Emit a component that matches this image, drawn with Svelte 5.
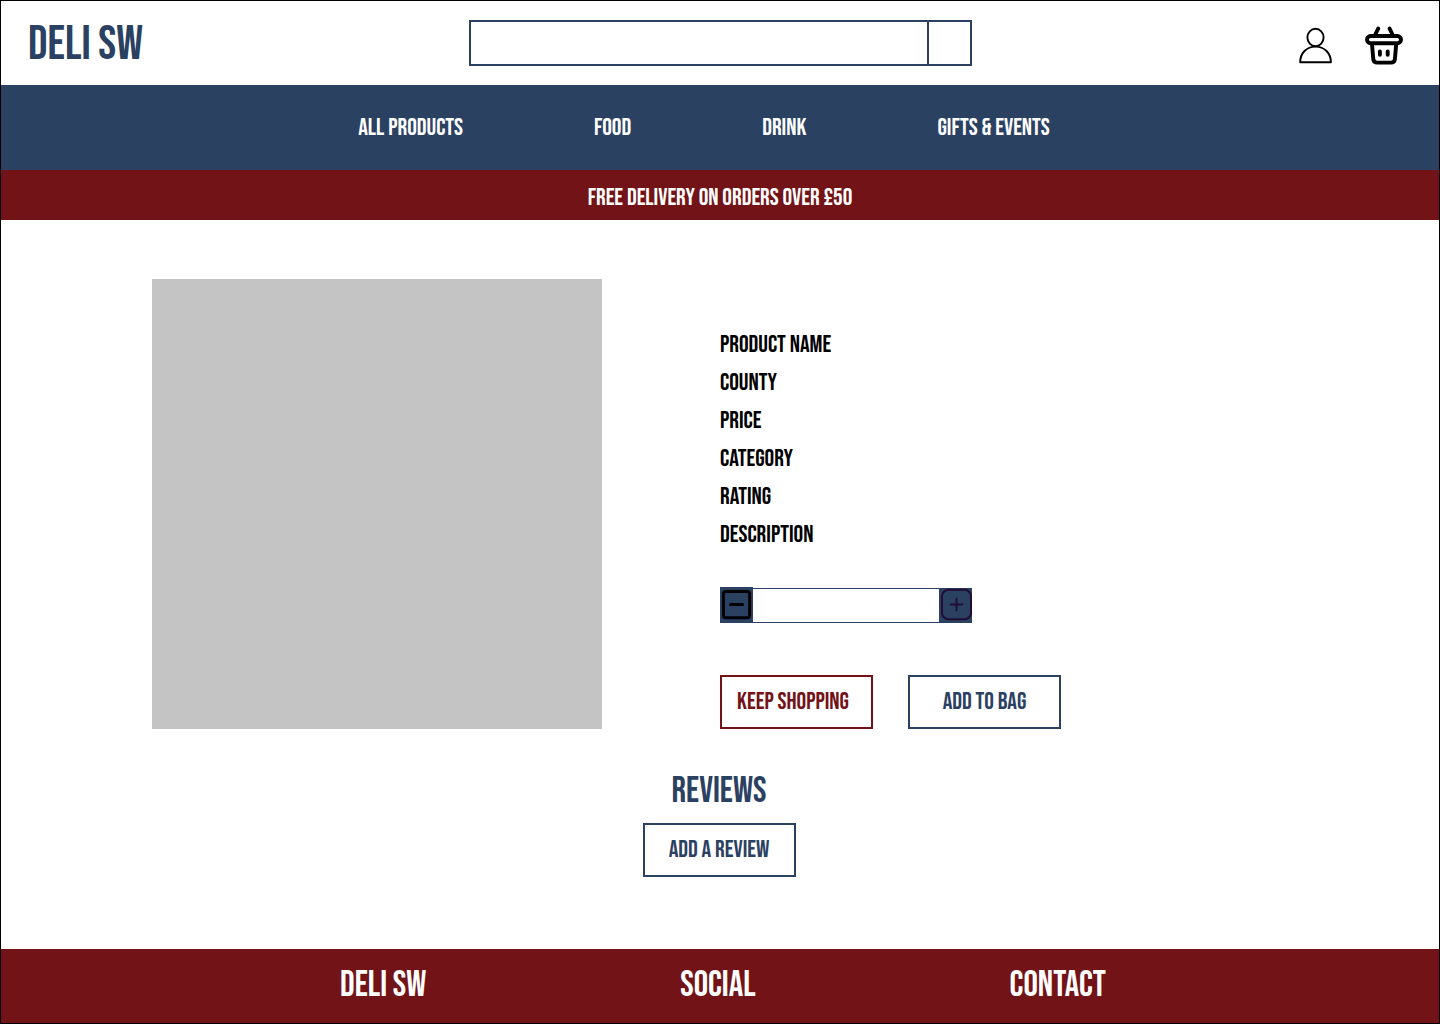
<script>
  const navItems = ['ALL PRODUCTS', 'FOOD', 'DRINK', 'GIFTS & EVENTS'];
  const details = ['PRODUCT NAME', 'COUNTY', 'PRICE', 'CATEGORY', 'RATING', 'DESCRIPTION'];
  const footerItems = ['DELI SW', 'SOCIAL', 'CONTACT'];
  let quantity = $state('');

  function step(amount) {
    quantity = String(Math.max(0, (Number(quantity) || 0) + amount));
  }
</script>

<div class="page">
  <header class="top">
    <a class="logo" href="#home">DELI SW</a>
    <form class="search" role="search" onsubmit={(e) => e.preventDefault()}>
      <input type="search" aria-label="Search products" />
      <button type="submit" aria-label="Search"></button>
    </form>
    <div class="actions">
      <a href="#account" aria-label="Account">
        <svg width="34" height="38" viewBox="0 0 34 38" fill="none" stroke="#000" stroke-width="1.9">
          <ellipse cx="16.5" cy="10.5" rx="8.1" ry="8.7" />
          <path d="M1.2 35.2C1.2 26.2 7.6 19.6 16.5 19.6S31.9 26.2 31.9 35.2Z" stroke-linejoin="round" />
        </svg>
      </a>
      <a href="#basket" aria-label="Basket">
        <svg width="38" height="40" viewBox="0 0 38 40" fill="none" stroke="#000" stroke-width="3.9" stroke-linecap="round" stroke-linejoin="round">
          <path d="M13.2 2.6L9.8 9.5M24.6 2.6L28 9.5" />
          <rect x="2" y="10" width="34" height="7.2" rx="3.6" />
          <path d="M7 18L8.3 33.3Q8.7 36.6 12.2 36.6H26Q29.5 36.6 29.9 33.3L31.2 18" />
          <path d="M14.9 25.4V28.8M22.7 25.4V28.8" />
        </svg>
      </a>
    </div>
  </header>

  <nav class="nav" aria-label="Main">
    {#each navItems as item}
      <a href="#shop">{item}</a>
    {/each}
  </nav>

  <p class="banner">FREE DELIVERY ON ORDERS OVER £50</p>

  <main>
    <section class="product" aria-label="Product">
      <div class="photo"></div>
      <div class="info">
        <ul>
          {#each details as detail}
            <li>{detail}</li>
          {/each}
        </ul>
        <div class="quantity">
          <button type="button" aria-label="Decrease quantity" onclick={() => step(-1)}>
            <svg width="33" height="36" viewBox="0 0 33 36" fill="none" stroke="#000" stroke-width="3" stroke-linecap="round">
              <rect x="3.4" y="4.4" width="26.2" height="26.4" rx="2.5" />
              <path d="M10.5 17.5H22.5" />
            </svg>
          </button>
          <input type="text" inputmode="numeric" aria-label="Quantity" bind:value={quantity} />
          <button type="button" aria-label="Increase quantity" onclick={() => step(1)}>
            <svg width="33" height="35" viewBox="0 0 33 35" fill="none" stroke="#210d35" stroke-width="2" stroke-linecap="round">
              <rect x="3" y="1.8" width="29" height="29.4" rx="6.5" />
              <path d="M11.7 16.5H23.3M17.5 10.7V22.3" />
            </svg>
          </button>
        </div>
        <div class="buttons">
          <button class="btn red" type="button">KEEP SHOPPING</button>
          <button class="btn" type="button">ADD TO BAG</button>
        </div>
      </div>
    </section>

    <section class="reviews">
      <h2>REVIEWS</h2>
      <button class="btn" type="button">ADD A REVIEW</button>
    </section>
  </main>

  <footer>
    {#each footerItems as item}
      <a href="#footer">{item}</a>
    {/each}
  </footer>
</div>

<style>
  :global(body) {
    margin: 0;
  }
  .page {
    --navy: #2b4162;
    --red: #721317;
    box-sizing: border-box;
    min-height: 100vh;
    display: flex;
    flex-direction: column;
    border: 1px solid #000;
    background: #fff;
    color: #000;
    font-family: 'Bebas Neue', 'Roboto Condensed', 'Liberation Sans Narrow', sans-serif;
    font-size: 24px;
    font-weight: 400;
    line-height: 24px;
  }
  a {
    color: inherit;
    text-decoration: none;
  }
  button,
  input {
    box-sizing: border-box;
    margin: 0;
    padding: 0;
    border: 0;
    border-radius: 0;
    background: none;
    color: inherit;
    font: inherit;
  }
  button {
    cursor: pointer;
  }
  svg {
    display: block;
  }
  .top {
    display: grid;
    grid-template-columns: 1fr minmax(0, 503px) 1fr;
    align-items: center;
    min-height: 84px;
    padding: 0 27px;
    box-sizing: border-box;
  }
  .logo {
    padding-top: 4px;
    color: var(--navy);
    font-size: 48px;
    line-height: 48px;
  }
  .search {
    display: flex;
    height: 46px;
    box-sizing: border-box;
    border: 2px solid var(--navy);
  }
  .search input {
    flex: 1;
    min-width: 0;
    padding: 0 12px;
    appearance: none;
  }
  .search button {
    width: 43px;
    border-left: 2px solid var(--navy);
  }
  .actions {
    display: flex;
    justify-content: flex-end;
    align-items: center;
    gap: 32px;
    padding: 6px 9px 0 0;
  }
  .nav {
    display: flex;
    justify-content: center;
    align-items: center;
    flex-wrap: wrap;
    gap: 0 131px;
    min-height: 85px;
    padding-right: 32px;
    background: var(--navy);
    color: #fff;
  }
  .banner {
    margin: 0;
    padding: 16px 0 10px;
    background: var(--red);
    color: #fff;
    text-align: center;
  }
  main {
    flex: 1;
  }
  .product {
    display: flex;
    align-items: flex-end;
    flex-wrap: wrap;
    gap: 32px 118px;
    padding: 59px 151px 0;
  }
  .photo {
    width: 450px;
    aspect-ratio: 1;
    background: #c4c4c4;
  }
  ul {
    margin: 0 0 33px;
    padding: 0;
    list-style: none;
    line-height: 38px;
  }
  .quantity {
    display: flex;
    align-items: flex-end;
    width: 252px;
    margin-bottom: 52px;
  }
  .quantity button {
    background: var(--navy);
  }
  .quantity input {
    flex: 1;
    min-width: 0;
    height: 35px;
    border: solid var(--navy);
    border-width: 1px 0;
    text-align: center;
  }
  .buttons {
    display: flex;
    gap: 35px;
  }
  .btn {
    width: 153px;
    height: 54px;
    border: 2px solid var(--navy);
    color: var(--navy);
  }
  .btn.red {
    padding-right: 7px;
    border-color: var(--red);
    color: var(--red);
  }
  .reviews {
    display: flex;
    flex-direction: column;
    align-items: center;
    gap: 9px;
    padding: 41px 2px 48px 0;
  }
  h2 {
    margin: 0;
    color: var(--navy);
    font-size: 36px;
    font-weight: 400;
    line-height: 44px;
  }
  footer {
    display: flex;
    justify-content: center;
    align-items: center;
    flex-wrap: wrap;
    gap: 0 254px;
    min-height: 74px;
    padding-left: 6px;
    box-sizing: border-box;
    background: var(--red);
    color: #fff;
    font-size: 36px;
    line-height: 36px;
  }
</style>
